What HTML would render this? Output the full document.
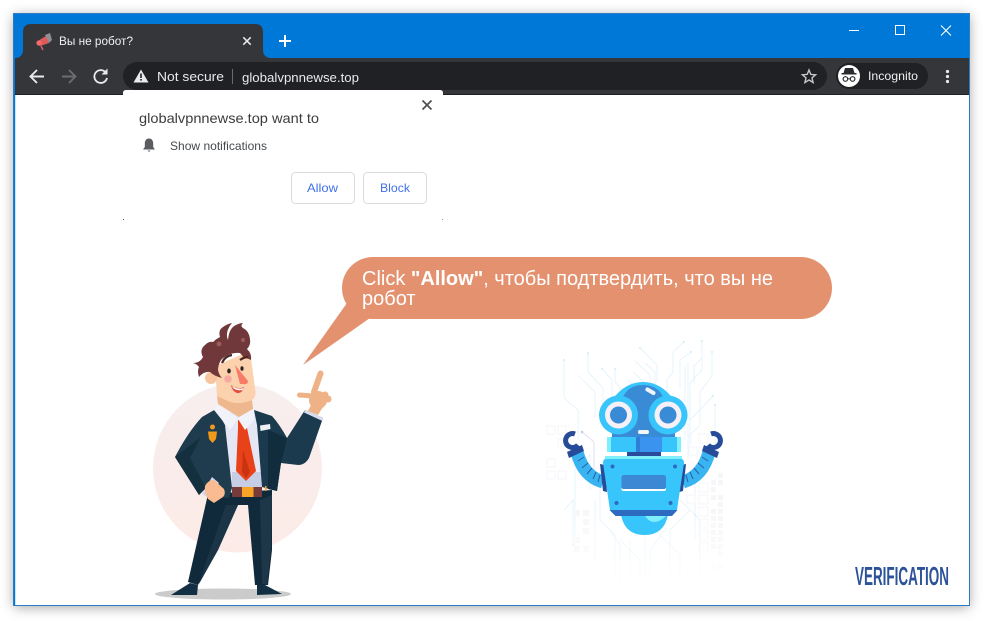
<!DOCTYPE html>
<html lang="ru">
<head>
<meta charset="utf-8">
<title>Вы не робот?</title>
<style>
html,body{margin:0;padding:0;width:985px;height:621px;overflow:hidden;background:#fff}
#win{position:absolute;left:14px;top:14px;width:955px;height:591px;box-shadow:0 2px 12px rgba(0,0,0,.38)}
svg{position:absolute;left:0;top:0;display:block}
text{font-family:"Liberation Sans","Noto Sans CJK SC",sans-serif}
</style>
</head>
<body>
<div id="win"></div>
<svg width="985" height="621" viewBox="0 0 985 621" xmlns="http://www.w3.org/2000/svg">
<defs>
<linearGradient id="fade" x1="0" y1="0" x2="0" y2="1">
<stop offset="0" stop-color="#fff" stop-opacity="0"/>
<stop offset="1" stop-color="#fff" stop-opacity="1"/>
</linearGradient>
<linearGradient id="pk" x1="0" y1="0" x2="0" y2="1">
<stop offset="0" stop-color="#f7eeee"/>
<stop offset="1" stop-color="#fcebe7"/>
</linearGradient>
</defs>

<!-- window frame -->
<rect x="13.5" y="13.5" width="956" height="592" fill="#fff" stroke="#2a7cc7" stroke-width="1"/>
<rect x="14" y="14" width="955" height="44" fill="#0078d7"/>
<rect x="14" y="14" width="1.2" height="591" fill="#0078d7"/>
<rect x="15" y="58" width="954" height="36" fill="#35363a"/>
<rect x="15" y="94" width="954" height="1" fill="#1f2023"/>

<!-- tab -->
<path d="M15 58C20 58 23 55 23 50V32Q23 24 31 24H255Q263 24 263 32V50C263 55 266 58 271 58Z" fill="#35363a"/>
<g>
<path d="M36 42L46 36L49 43L40 46Z" fill="#e05a5a"/>
<circle cx="39" cy="43" r="2.6" fill="#f26c6c"/>
<path d="M45 35L50 33L52 40L49 43Z" fill="#8e8f94"/>
<path d="M41 46L43 50" stroke="#d8605c" stroke-width="1.5"/>
</g>
<text x="59" y="45" font-size="12" fill="#f1f1f1" textLength="74" lengthAdjust="spacingAndGlyphs">Вы не робот?</text>
<path d="M243.3 37.3L250.7 44.7M250.7 37.3L243.3 44.7" stroke="#e8eaed" stroke-width="1.5"/>
<path d="M285 35V47M279 41H291" stroke="#fff" stroke-width="2"/>

<!-- caption buttons -->
<rect x="849" y="30" width="10" height="1" fill="#fff"/>
<rect x="895.5" y="25.5" width="9" height="9" fill="none" stroke="#fff" stroke-width="1"/>
<path d="M941 25.5L951 35.5M951 25.5L941 35.5" stroke="#fff" stroke-width="1.1"/>

<!-- nav icons -->
<path d="M44 76.5H31M37 70L30.5 76.5L37 83" fill="none" stroke="#e8eaed" stroke-width="1.9"/>
<path d="M62 76.5H75M69 70L75.5 76.5L69 83" fill="none" stroke="#6c6d70" stroke-width="1.9"/>
<path d="M105.5 72.2A6.4 6.4 0 1 0 107 78" fill="none" stroke="#e8eaed" stroke-width="1.8"/>
<path d="M107.5 68.5V74.5H101.5Z" fill="#e8eaed"/>

<!-- omnibox -->
<rect x="123" y="62" width="704" height="28" rx="14" fill="#202124"/>
<path d="M141 69.5L148.5 82.5H133.5Z" fill="#e8eaed"/>
<rect x="140.2" y="73.5" width="1.6" height="4.5" fill="#202124"/>
<rect x="140.2" y="79" width="1.6" height="1.6" fill="#202124"/>
<text x="157" y="81" font-size="13" fill="#e8eaed" textLength="67" lengthAdjust="spacingAndGlyphs">Not secure</text>
<rect x="232" y="69" width="1" height="15" fill="#6a6b6e"/>
<text x="242" y="82" font-size="13" fill="#e8eaed" textLength="117" lengthAdjust="spacingAndGlyphs">globalvpnnewse.top</text>
<path d="M809 70L810.8 74.4L815.6 74.8L812 77.9L813.1 82.5L809 80L804.9 82.5L806 77.9L802.4 74.8L807.2 74.4Z" fill="none" stroke="#c4c6c9" stroke-width="1.4"/>

<!-- incognito -->
<rect x="836" y="63" width="92" height="26" rx="13" fill="#202124"/>
<circle cx="849" cy="76" r="11" fill="#fff"/>
<path d="M843.500 73L845 68H853L854.500 73Z" fill="#2a2b2e"/>
<rect x="841.500" y="73" width="15" height="1.500" fill="#2a2b2e"/>
<circle cx="845.400" cy="79" r="2.300" fill="none" stroke="#2a2b2e" stroke-width="1.200"/>
<circle cx="852.600" cy="79" r="2.300" fill="none" stroke="#2a2b2e" stroke-width="1.200"/>
<path d="M847.700 78.800H850.300" stroke="#2a2b2e" stroke-width="1"/>
<text x="868" y="80" font-size="12" fill="#f1f1f1" textLength="50" lengthAdjust="spacingAndGlyphs">Incognito</text>
<circle cx="947.500" cy="71.500" r="1.600" fill="#e8eaed"/>
<circle cx="947.500" cy="76.500" r="1.600" fill="#e8eaed"/>
<circle cx="947.500" cy="81.500" r="1.600" fill="#e8eaed"/>

<!-- permission popup -->
<path d="M123 219V93Q123 90 126 90H440Q443 90 443 93V219Z" fill="#fff"/>
<rect x="123" y="219" width="1" height="1" fill="#555"/>
<rect x="442" y="219" width="1" height="1" fill="#999"/>
<path d="M422.500 100.500L431.500 109.500M431.500 100.500L422.500 109.500" stroke="#505154" stroke-width="1.800"/>
<text x="139" y="123" font-size="14" fill="#3c3c3c" textLength="180" lengthAdjust="spacingAndGlyphs">globalvpnnewse.top want to</text>
<path d="M149 138.500C146 138.500 144.800 141 144.800 143.500V147L143 149.500H155L153.200 147V143.500C153.200 141 152 138.500 149 138.500Z" fill="#5a5c60"/>
<path d="M147.500 150.500H150.500L149 152Z" fill="#5a5c60"/>
<text x="170" y="150" font-size="12" fill="#454a50" textLength="97" lengthAdjust="spacingAndGlyphs">Show notifications</text>
<rect x="291.500" y="172.500" width="63" height="31" rx="4" fill="#fff" stroke="#d9dbdf"/>
<rect x="363.500" y="172.500" width="63" height="31" rx="4" fill="#fff" stroke="#d9dbdf"/>
<text x="307" y="192" font-size="12" fill="#4071e8" textLength="31" lengthAdjust="spacingAndGlyphs">Allow</text>
<text x="380" y="192" font-size="12" fill="#4071e8" textLength="30" lengthAdjust="spacingAndGlyphs">Block</text>

<!-- speech bubble -->
<rect x="342" y="257" width="490" height="62" rx="31" fill="#e4916f"/>
<path d="M347 303L303 365L370 318Z" fill="#e4916f"/>
<text x="362" y="285" font-size="20" fill="#fff">Click <tspan font-weight="bold">"Allow"</tspan>, чтобы подтвердить, что вы не</text>
<text x="362" y="305" font-size="20" fill="#fff">робот</text>

<!-- man -->
<circle cx="237.500" cy="468" r="84.500" fill="url(#pk)"/>
<ellipse cx="223" cy="594" rx="68" ry="5.500" fill="#cbcbcb"/>
<!-- trousers -->
<path d="M208 494L272 490L272 550L268 585L255 585L248 505H238L218 550L198 585L188 582Z" fill="#10293b"/>
<path d="M226 505L238 505L218 550L199 584L206 562Z" fill="#1b3547"/>
<path d="M260 500L272 495L271 550L267 584L262 584Z" fill="#1d3749"/>
<path d="M171 595L190 583L198 585L197 595Z" fill="#132f43"/>
<path d="M257 585L265 585L282 594L257 595Z" fill="#132f43"/>
<!-- shirt -->
<path d="M224 412L258 412L262 487L232 488Z" fill="#e6e7f5"/>
<path d="M232 472L261 472L262 487L232 488Z" fill="#c8cde6"/>
<!-- jacket -->
<path d="M216 409L202 417Q188 432 175 457L199 495L212 480L207 452L207 482L212 497L229 498L232 488L225 425Z" fill="#1f3b4e"/>
<path d="M254 410L272 416Q280 425 287 438L305 410L323 418L309 458Q305 465 298 465L281 463L277 491L262 487L257 425Z" fill="#1c3a4d"/>
<path d="M175 457L199 495L206 488L190 458L201 437Z" fill="#14303f"/>
<path d="M268 430L287 438L281 463L277 491L268 489Z" fill="#102c3d"/>
<path d="M202 494L212 477L219 483L207 497Z" fill="#d3d7ea"/>
<path d="M305 410L323 418L322.500 421L304 412.500Z" fill="#d7dcf0"/>
<!-- belt -->
<rect x="232" y="487" width="30" height="10" fill="#773b3a"/>
<rect x="242" y="487" width="11.500" height="10" fill="#f9a327"/>
<path d="M265 486h1.500v5H265z" fill="#f0a030"/>
<!-- fist -->
<path d="M205 486Q208 480 214 480L224 489Q226 494 223 497L214 503L208 499Q204 492 205 486Z" fill="#f9bb8f"/>
<!-- tie -->
<path d="M238 420H245L247 428L256 471L246 481L236 471L238 428Z" fill="#e8421a"/>
<path d="M243 450L250 472L246 478L242 472Z" fill="#c93310"/>
<!-- badge -->
<circle cx="212.500" cy="427" r="2.500" fill="#f09a1c"/>
<path d="M208 431.500H217L216 439L212.500 443L209 439Z" fill="#f09a1c"/>
<path d="M260 425.500L270 424L270.500 429L260.500 431Z" fill="#eef0f8"/>
<!-- collar -->
<path d="M216 404L238 418L254 407L254 420L245 430L238 419L230 430L214 410Z" fill="#f1f2fa"/>
<!-- neck + head -->
<path d="M217 395L252 400L253 409L239 417L218 404Z" fill="#eeb78d"/>
<path d="M215 366L250 351L255 388Q257 397 252 400Q240 405 230 402L217 396Z" fill="#fbd2ad"/>
<circle cx="211" cy="378" r="6" fill="#f7c69f"/>
<!-- hair -->
<path d="M193 363Q200 363 203 357Q199 350 205 345Q209 341 213 342Q216 339 220 337Q218 330 223 327Q227 324 232 323Q226 330 227 337L228 340Q229 328 236 325Q240 323 243 323Q240 326 243 328Q249 331 250 339Q251 345 247 349Q252 354 251 360Q247 358 244 358Q242 355 240 353Q229 352 221 360Q218 365 218 370Q219 375 222 378Q214 376 210 372Q204 371 199 377Q197 371 199 367Q197 364 193 363Z" fill="#70383a"/>
<circle cx="219" cy="344" r="2.500" fill="#9b5b58"/>
<circle cx="243" cy="340" r="2" fill="#9b5b58"/>
<path d="M222 363Q225 356 232 355M240 360Q244 357 248 357" fill="none" stroke="#4c2525" stroke-width="2.200"/>
<!-- face -->
<ellipse cx="229" cy="371" rx="1.800" ry="2.500" fill="#2f2322"/>
<ellipse cx="242" cy="368.500" rx="1.600" ry="2.300" fill="#2f2322"/>
<circle cx="228" cy="379" r="3.800" fill="#f8a9a0"/>
<path d="M235 365L248 381Q248 385 243 384L240 384Z" fill="#f77c68"/>
<path d="M231 385Q238 390 244 387Q242 394 237 393Q232 391 231 385Z" fill="#e34d3b"/>
<path d="M232 386Q238 390 243.500 388L242.500 390Q237 391 233 388Z" fill="#fff"/>
<!-- hand -->
<g fill="none" stroke="#efb286" stroke-linecap="round">
<path d="M320.500 373.500L314 392" stroke-width="6"/>
<path d="M299.500 395L313 396" stroke-width="5"/>
</g>
<circle cx="318" cy="400" r="9" fill="#efb286"/>
<circle cx="325" cy="395" r="3.500" fill="#efb286"/>
<circle cx="328" cy="399" r="3.500" fill="#efb286"/>
<path d="M311 405L323 407L318 415L308 411Z" fill="#efb286"/>

<!-- circuit traces -->
<g fill="none" stroke="#dcf1f9" stroke-width="0.700">
<path d="M564 360V398L578 410V440"/>
<path d="M578 375L595 392V418"/>
<path d="M588 353V372L603 388V408"/>
<path d="M602 369L612 380V395"/>
<path d="M615 369V382L630 398"/>
<path d="M628 380L640 392"/>
<path d="M633 372L648 386"/>
<path d="M635 361L650 375V390"/>
<path d="M645 363L655 372V385"/>
<path d="M640 348L657 365V382"/>
<path d="M684 342L673 352V372L667 380V392"/>
<path d="M691 352L680 360V388"/>
<path d="M702 341V370L690 383V420"/>
<path d="M712 352V376L700 392V425L688 437"/>
<path d="M685 365V440"/>
<path d="M688 363V460"/>
<path d="M702 358L694 366V385"/>
<path d="M713 396L690 420V445"/>
<path d="M715 405V445"/>
<path d="M590 490V455L575 470V545"/>
<path d="M564 510L573 500V545"/>
<path d="M600 480V520L615 535V580"/>
<path d="M595 500V560"/>
<path d="M610 530L620 545V590"/>
<path d="M620 540L640 560V590"/>
<path d="M630 540V590"/>
<path d="M645 535V590"/>
<path d="M655 530L680 555V590"/>
<path d="M665 530L650 550V590"/>
<path d="M680 500L700 520V575"/>
<path d="M690 510L670 530V590"/>
<path d="M695 480V540"/>
</g>
<g fill="#d3ecf6">
<circle cx="564" cy="360" r="1"/><circle cx="588" cy="353" r="1"/><circle cx="602" cy="369" r="1"/>
<circle cx="615" cy="369" r="1"/><circle cx="640" cy="348" r="1"/><circle cx="684" cy="342" r="1"/>
<circle cx="702" cy="341" r="1"/><circle cx="712" cy="352" r="1"/><circle cx="691" cy="352" r="1"/>
<circle cx="713" cy="396" r="1"/><circle cx="715" cy="405" r="1"/><circle cx="573" cy="545" r="1"/>
<circle cx="695" cy="515" r="1"/>
</g>
<path d="M582 432L594 442V470" fill="none" stroke="#d4d7ec" stroke-width="0.800"/>
<circle cx="582" cy="432" r="1.300" fill="#c3c8e6"/>
<g fill="none" stroke="#f5f6f9" stroke-width="1">
<rect x="547" y="426" width="8" height="8"/><rect x="558" y="426" width="8" height="8"/>
<rect x="558" y="439" width="8" height="8"/><rect x="547" y="459" width="8" height="8"/>
<rect x="547" y="471" width="8" height="8"/><rect x="558" y="471" width="8" height="8"/>
<rect x="699" y="434" width="9" height="9"/><rect x="699" y="447" width="9" height="9"/>
<rect x="689" y="447" width="8" height="8"/>
<rect x="699" y="483" width="9" height="9"/><rect x="699" y="495" width="9" height="9"/>
<rect x="699" y="507" width="9" height="9"/><rect x="699" y="519" width="9" height="9"/>
<rect x="699" y="531" width="9" height="9"/><rect x="699" y="543" width="9" height="9"/>
<rect x="687" y="495" width="8" height="8"/>
</g>
<g fill="#f6f6f8">
<rect x="574" y="510" width="6" height="6"/><rect x="583" y="510" width="6" height="6"/>
<rect x="583" y="519" width="6" height="6"/><rect x="583" y="528" width="6" height="6"/>
<rect x="574" y="537" width="6" height="6"/><rect x="574" y="546" width="6" height="6"/><rect x="583" y="546" width="6" height="6"/>
<rect x="718" y="473" width="5" height="5"/><rect x="711" y="480" width="5" height="5"/><rect x="718" y="480" width="5" height="5"/>
<rect x="711" y="487" width="5" height="5"/><rect x="711" y="495" width="5" height="5"/><rect x="718" y="495" width="5" height="5"/>
<rect x="718" y="502" width="5" height="5"/><rect x="711" y="509" width="5" height="5"/><rect x="718" y="509" width="5" height="5"/>
<rect x="711" y="516" width="5" height="5"/><rect x="718" y="516" width="5" height="5"/>
<rect x="711" y="523" width="5" height="5"/><rect x="718" y="523" width="5" height="5"/>
<rect x="711" y="530" width="5" height="5"/><rect x="718" y="530" width="5" height="5"/>
<rect x="711" y="537" width="5" height="5"/><rect x="718" y="537" width="5" height="5"/>
<rect x="711" y="544" width="5" height="5"/><rect x="718" y="544" width="5" height="5"/>
<rect x="718" y="551" width="5" height="5"/><rect x="711" y="565" width="5" height="5"/><rect x="718" y="565" width="5" height="5"/>
</g>
<rect x="540" y="505" width="200" height="85" fill="url(#fade)"/>

<!-- robot arms -->
<path d="M577 452Q583 476 603 482" fill="none" stroke="#38b4f0" stroke-width="13"/>
<path d="M709 452Q703 476 683 482" fill="none" stroke="#38b4f0" stroke-width="13"/>
<g stroke="#2a5fa8" stroke-width="1">
<path d="M578 461L584 457M582 468L588 463M587 474L592 468M593 479L596 472M598 482L600 475"/>
<path d="M708 461L702 457M704 468L698 463M699 474L694 468M693 479L690 472M688 482L686 475"/>
</g>
<path d="M567 452L582 445L584 451L569 458Z" fill="#264b98"/>
<path d="M719 452L704 445L702 451L717 458Z" fill="#264b98"/>
<path d="M600 464L605 465L607 492L603 491Z" fill="#264b98"/>
<path d="M686 464L681 465L679 492L683 491Z" fill="#264b98"/>
<!-- claws -->
<path d="M575 434A7 7 0 1 0 578 445" fill="none" stroke="#264b98" stroke-width="5"/>
<path d="M711 434A7 7 0 1 1 708 445" fill="none" stroke="#264b98" stroke-width="5"/>
<!-- robot head -->
<path d="M612 437V400Q625 382 643 382Q661 382 674 400V437Z" fill="#38c5fb"/>
<path d="M612 437V425L620 410Q622 385 643 385Q664 385 666 410L675 425V437Z" fill="#3a8bd6"/>
<rect x="645" y="389" width="11" height="4" rx="2" transform="rotate(30 650 391)" fill="#f2f5fb"/>
<rect x="638" y="430" width="11" height="4" rx="2" fill="#f5f6fb"/>
<circle cx="618.500" cy="415" r="19.500" fill="#38c5fb"/>
<circle cx="668" cy="415" r="19.500" fill="#38c5fb"/>
<circle cx="618.500" cy="415" r="13.500" fill="#f7f1f7"/>
<circle cx="668" cy="415" r="13.500" fill="#f7f1f7"/>
<circle cx="618.500" cy="415" r="8.500" fill="#3a8bd6"/>
<circle cx="668" cy="415" r="8.500" fill="#3a8bd6"/>
<!-- collar -->
<rect x="607" y="437" width="74" height="15" fill="#7ff0fb"/>
<rect x="611" y="437" width="66" height="15" fill="#38c5fb"/>
<rect x="636" y="437" width="26" height="15" fill="#3b93f0"/>
<rect x="636" y="437" width="4" height="15" fill="#2f7fd8"/>
<rect x="627" y="452" width="34" height="4" fill="#2a4b9b"/>
<rect x="605" y="456" width="77" height="4" fill="#7ff0fb"/>
<!-- chin -->
<path d="M621 515H668Q664 535 644.500 535Q625 535 621 515Z" fill="#38c5fb"/>
<path d="M645 516H666Q660 522 654 522Q649 522 645 516Z" fill="#7ff0fb"/>
<!-- body -->
<path d="M606 459H681Q684 459 684 463L677 510L671 516H616L610 510L603 463Q603 459 606 459Z" fill="#38c5fb"/>
<path d="M609.500 510H677.500L672 516H615.500Z" fill="#2d6bc0"/>
<rect x="621.500" y="475" width="44.500" height="16" rx="2" fill="#fff"/>
<rect x="621.500" y="475" width="44.500" height="14" rx="2" fill="#3c88d4"/>
<circle cx="612.500" cy="466.500" r="2" fill="#2d6bc0"/>
<circle cx="675" cy="466.500" r="2" fill="#2d6bc0"/>
<circle cx="616.500" cy="503" r="2" fill="#2d6bc0"/>
<circle cx="670.500" cy="503" r="2" fill="#2d6bc0"/>

<!-- verification -->
<text x="855" y="585" font-size="26" font-weight="bold" fill="#2c5299" textLength="94" lengthAdjust="spacingAndGlyphs">VERIFICATION</text>
</svg>
</body>
</html>
